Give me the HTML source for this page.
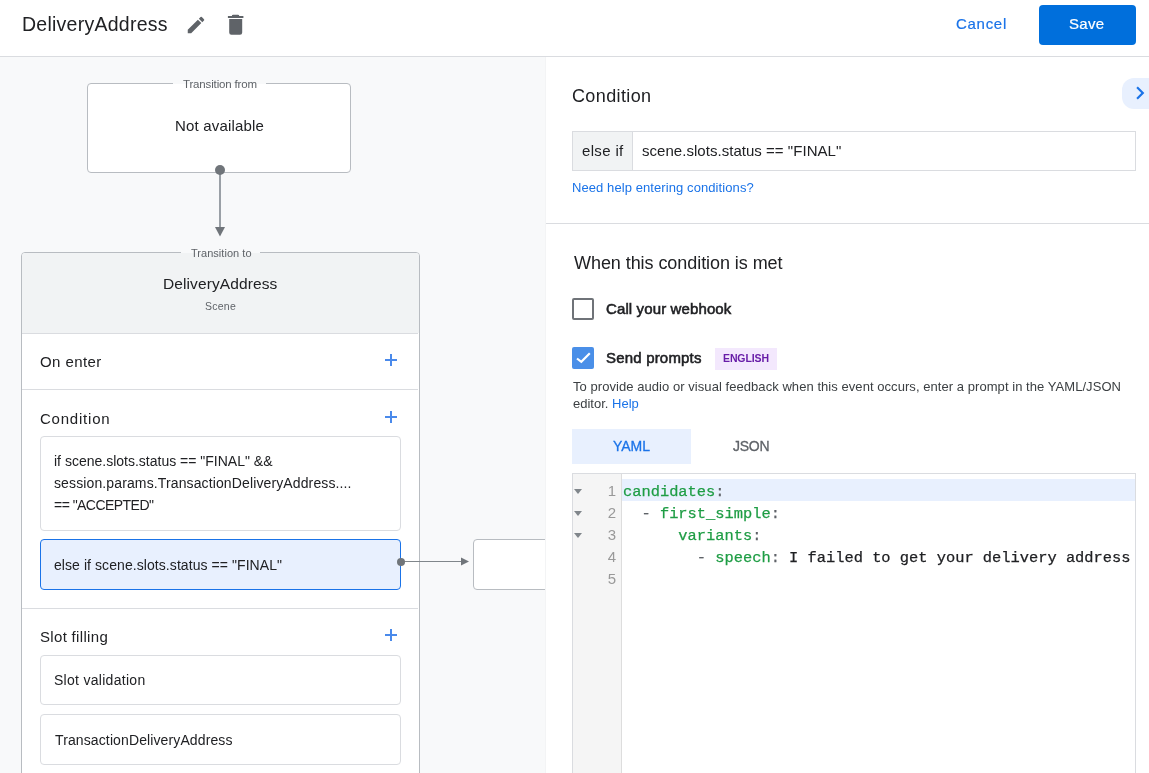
<!DOCTYPE html>
<html><head><meta charset="utf-8"><style>
*{box-sizing:border-box;margin:0;padding:0}
html,body{width:1149px;height:773px;overflow:hidden;background:#fff;font-family:"Liberation Sans",sans-serif;color:#202124}
.a{position:absolute}
.t{position:absolute;white-space:nowrap;line-height:1;font-family:"Liberation Sans",sans-serif;z-index:5;will-change:transform}
.plus{position:absolute;width:12px;height:12px}
.plus:before,.plus:after{content:"";position:absolute;background:#4285f4}
.plus:before{left:5px;top:0;width:2px;height:12px}
.plus:after{left:0;top:5px;width:12px;height:2px}
.code{position:absolute;font-family:"Liberation Mono",monospace;font-size:15.38px;white-space:pre;line-height:22px;color:#202124;z-index:5;will-change:transform;-webkit-text-stroke:0.25px currentColor}
.g{color:#1f9d45}
.p{color:#5f6368}
.ln{position:absolute;font-family:"Liberation Sans",sans-serif;font-size:15px;color:#999999;line-height:22px;text-align:right;width:30px;z-index:5;will-change:transform}
.fold{position:absolute;width:0;height:0;border-left:4.5px solid transparent;border-right:4.5px solid transparent;border-top:5px solid #80868b}
</style></head><body>
<div class="a" style="left:0;top:56px;width:1149px;height:1px;background:#dadce0"></div>
<svg class="a" style="left:184.7px;top:14px" width="22" height="22" viewBox="0 0 24 24"><path fill="#5f6368" d="M3 17.25V21h3.75L17.81 9.94l-3.75-3.75L3 17.25zM20.71 7.04a.996.996 0 0 0 0-1.41l-2.34-2.34a.996.996 0 0 0-1.41 0l-1.83 1.83 3.75 3.75 1.83-1.83z"/></svg>
<svg class="a" style="left:0;top:0" width="300" height="56"><path fill="#5f6368" d="M231.8 16.2 Q231.8 14.8 233.2 14.8 H237.9 Q239.3 14.8 239.3 16.2 Z M227.9 16.1 H243.4 V17.9 H227.9 Z M229.2 19.1 H242.2 V32.6 Q242.2 34.8 240 34.8 H231.4 Q229.2 34.8 229.2 32.6 Z"/></svg>
<div class="a" style="left:1039px;top:5px;width:97px;height:40px;background:#006fdc;border-radius:4px"></div>
<div class="a" style="left:0;top:57px;width:546px;height:716px;background:#f8f9fa"></div>
<div class="a" style="left:87px;top:83px;width:264px;height:90px;background:#fff;border:1px solid #b8bcc1;border-radius:4px"></div>
<div class="a" style="left:173px;top:78px;width:93px;height:12px;background:linear-gradient(#f8f9fa 50%,#fff 50%)"></div>
<div class="a" style="left:219px;top:172px;width:2px;height:56px;background:#9aa0a6"></div>
<div class="a" style="left:215px;top:164.6px;width:10px;height:10px;border-radius:50%;background:#70757a"></div>
<svg class="a" style="left:214px;top:226px" width="12" height="12"><path d="M1 1H11L6 10.5Z" fill="#70757a"/></svg>
<div class="a" style="left:21px;top:252px;width:399px;height:560px;background:#fff;border:1px solid #b8bcc1;border-radius:4px;overflow:hidden"><div class="a" style="left:0;top:0;width:397px;height:80px;background:#f1f3f4"></div></div>
<div class="a" style="left:181px;top:247px;width:79px;height:12px;background:linear-gradient(#f8f9fa 50%,#f1f3f4 50%)"></div>
<div class="a" style="left:22px;top:333px;width:396px;height:1px;background:#dadce0"></div>
<div class="a" style="left:22px;top:389px;width:396px;height:1px;background:#dadce0"></div>
<div class="a" style="left:22px;top:608px;width:396px;height:1px;background:#dadce0"></div>
<svg class="a" style="left:385px;top:354px" width="12" height="12"><path d="M5 0H7V5H12V7H7V12H5V7H0V5H5Z" fill="#4a8aeb"/></svg>
<svg class="a" style="left:385px;top:411px" width="12" height="12"><path d="M5 0H7V5H12V7H7V12H5V7H0V5H5Z" fill="#4a8aeb"/></svg>
<svg class="a" style="left:385px;top:629px" width="12" height="12"><path d="M5 0H7V5H12V7H7V12H5V7H0V5H5Z" fill="#4a8aeb"/></svg>
<div class="a" style="left:40px;top:436px;width:361px;height:95px;background:#fff;border:1px solid #dadce0;border-radius:4px"></div>
<div class="a" style="left:40px;top:539px;width:361px;height:51px;background:#e8f0fe;border:1px solid #1a73e8;border-radius:4px"></div>
<div class="a" style="left:40px;top:655px;width:361px;height:50px;background:#fff;border:1px solid #dadce0;border-radius:4px"></div>
<div class="a" style="left:40px;top:714px;width:361px;height:51px;background:#fff;border:1px solid #dadce0;border-radius:4px"></div>
<div class="a" style="left:403px;top:561px;width:59px;height:1px;background:#80868b"></div>
<div class="a" style="left:397px;top:557.5px;width:8px;height:8px;border-radius:50%;background:#70757a"></div>
<svg class="a" style="left:459px;top:555px" width="12" height="12"><path d="M2 2.5V10.5L10 6.5Z" fill="#70757a"/></svg>
<div class="a" style="left:473px;top:539px;width:120px;height:51px;background:#fff;border:1px solid #b8bcc1;border-radius:4px"></div>
<div class="a" style="left:545px;top:57px;width:1px;height:716px;background:#f3f4f5"></div>
<div class="a" style="left:546px;top:57px;width:603px;height:716px;background:#fff"></div>
<div class="a" style="left:1122px;top:78px;width:40px;height:31px;background:#e8f0fe;border-radius:12px 0 0 12px"></div>
<svg class="a" style="left:1126.9px;top:79.8px" width="26" height="26" viewBox="0 0 24 24"><path fill="#1a73e8" d="M10 6L8.59 7.41 13.17 12l-4.58 4.59L10 18l6-6z"/></svg>
<div class="a" style="left:572px;top:131px;width:564px;height:40px;border:1px solid #dadce0;background:#fff"></div>
<div class="a" style="left:572px;top:131px;width:61px;height:40px;border:1px solid #dadce0;background:#f1f3f4"></div>
<div class="a" style="left:546px;top:223px;width:603px;height:1px;background:#dadce0"></div>
<div class="a" style="left:572px;top:298px;width:22px;height:22px;border:2px solid #6f7378;border-radius:2px"></div>
<div class="a" style="left:572px;top:347px;width:22px;height:22px;background:#4a8fe8;border-radius:2px"></div>
<svg class="a" style="left:572px;top:347px" width="22" height="22"><path d="M5 11.5L9.3 14.8L17.8 6.3" stroke="#fff" stroke-width="2.2" fill="none"/></svg>
<div class="a" style="left:715px;top:348px;width:62px;height:22px;background:#f3e8fd"></div>
<div class="a" style="left:572px;top:429px;width:119px;height:35px;background:#e8f0fe"></div>
<div class="a" style="left:572px;top:473px;width:564px;height:320px;border:1px solid #dadce0;background:#fff"></div>
<div class="a" style="left:573px;top:474px;width:49px;height:300px;background:#f5f5f5;border-right:1px solid #dddddd"></div>
<div class="a" style="left:622px;top:479px;width:513px;height:22px;background:#e8f0fe"></div>
<div class="fold" style="left:574.2px;top:489px"></div>
<div class="fold" style="left:574.2px;top:511px"></div>
<div class="fold" style="left:574.2px;top:533px"></div>
<div class="ln" style="left:586px;top:480px">1<br>2<br>3<br>4<br>5</div>
<div class="code" style="left:623px;top:481px"><span class="g">candidates</span><span class="p">:</span>
  <span class="p">-</span> <span class="g">first_simple</span><span class="p">:</span>
      <span class="g">variants</span><span class="p">:</span>
        <span class="p">-</span> <span class="g">speech</span><span class="p">:</span> I failed to get your delivery address
</div>
<div class="t" id="h_title" style="left:21.86px;top:15px;font-size:19.5px;font-weight:normal;color:#202124;letter-spacing:0.253px">DeliveryAddress</div>
<div class="t" id="h_cancel" style="left:956.36px;top:16px;font-size:15px;font-weight:normal;-webkit-text-stroke:0.2px currentColor;color:#1a73e8;letter-spacing:0.708px">Cancel</div>
<div class="t" id="h_save" style="left:1069.00px;top:16px;font-size:15px;font-weight:normal;-webkit-text-stroke:0.2px currentColor;color:#ffffff;letter-spacing:0.307px">Save</div>
<div class="t" id="tf_lbl" style="left:182.50px;top:79px;font-size:11.5px;font-weight:normal;color:#5f6368;letter-spacing:-0.154px">Transition from</div>
<div class="t" id="na" style="left:174.86px;top:118px;font-size:15px;font-weight:normal;color:#202124;letter-spacing:0.180px">Not available</div>
<div class="t" id="tt_lbl" style="left:190.64px;top:248px;font-size:11px;font-weight:normal;color:#5f6368;letter-spacing:0.032px">Transition to</div>
<div class="t" id="sc_title" style="left:163.32px;top:276px;font-size:15.5px;font-weight:normal;color:#202124;letter-spacing:0.104px">DeliveryAddress</div>
<div class="t" id="sc_sub" style="left:204.64px;top:301px;font-size:10.5px;font-weight:normal;color:#5f6368;letter-spacing:0.250px">Scene</div>
<div class="t" id="on_enter" style="left:39.86px;top:354px;font-size:15px;font-weight:normal;color:#202124;letter-spacing:0.406px">On enter</div>
<div class="t" id="cond" style="left:39.86px;top:411px;font-size:15px;font-weight:normal;color:#202124;letter-spacing:0.780px">Condition</div>
<div class="t" id="c1l1" style="left:53.50px;top:454px;font-size:14px;font-weight:normal;color:#202124;letter-spacing:0.000px">if scene.slots.status == "FINAL" &amp;&amp;</div>
<div class="t" id="c1l2" style="left:53.50px;top:476px;font-size:14px;font-weight:normal;color:#202124;letter-spacing:0.124px">session.params.TransactionDeliveryAddress....</div>
<div class="t" id="c1l3" style="left:53.50px;top:498px;font-size:14px;font-weight:normal;color:#202124;letter-spacing:-0.538px">== "ACCEPTED"</div>
<div class="t" id="c2" style="left:53.86px;top:558px;font-size:14px;font-weight:normal;color:#202124;letter-spacing:0.071px">else if scene.slots.status == "FINAL"</div>
<div class="t" id="slotf" style="left:39.68px;top:629px;font-size:15px;font-weight:normal;color:#202124;letter-spacing:0.322px">Slot filling</div>
<div class="t" id="sv" style="left:53.50px;top:673px;font-size:14px;font-weight:normal;color:#202124;letter-spacing:0.286px">Slot validation</div>
<div class="t" id="tda" style="left:54.50px;top:733px;font-size:14px;font-weight:normal;color:#202124;letter-spacing:0.117px">TransactionDeliveryAddress</div>
<div class="t" id="r_cond" style="left:572.00px;top:87px;font-size:18px;font-weight:normal;color:#202124;letter-spacing:0.375px">Condition</div>
<div class="t" id="elseif" style="left:581.68px;top:143px;font-size:15px;font-weight:normal;color:#202124;letter-spacing:0.347px">else if</div>
<div class="t" id="inp" style="left:641.50px;top:143px;font-size:15px;font-weight:normal;color:#202124;letter-spacing:0.036px">scene.slots.status == "FINAL"</div>
<div class="t" id="help" style="left:572.00px;top:181px;font-size:13px;font-weight:normal;color:#1a73e8;letter-spacing:0.085px">Need help entering conditions?</div>
<div class="t" id="when" style="left:573.68px;top:254px;font-size:18px;font-weight:normal;color:#202124;letter-spacing:-0.062px">When this condition is met</div>
<div class="t" id="webhook" style="left:606.00px;top:301px;font-size:15px;font-weight:normal;-webkit-text-stroke:0.55px currentColor;color:#202124;letter-spacing:0.120px">Call your webhook</div>
<div class="t" id="sendp" style="left:606.36px;top:350px;font-size:15px;font-weight:normal;-webkit-text-stroke:0.55px currentColor;color:#202124;letter-spacing:0.189px">Send prompts</div>
<div class="t" id="eng" style="left:722.50px;top:353px;font-size:10.5px;font-weight:bold;color:#681da8;letter-spacing:-0.117px">ENGLISH</div>
<div class="t" id="para1" style="left:573.00px;top:380px;font-size:13px;font-weight:normal;color:#3c4043;letter-spacing:0.056px">To provide audio or visual feedback when this event occurs, enter a prompt in the YAML/JSON</div>
<div class="t" id="para2" style="left:573.00px;top:397px;font-size:13px;font-weight:normal;color:#3c4043;letter-spacing:0.007px">editor. <span style="color:#1a73e8">Help</span></div>
<div class="t" id="yaml" style="left:613.36px;top:439px;font-size:14px;font-weight:normal;-webkit-text-stroke:0.3px currentColor;color:#1a73e8;letter-spacing:-0.027px">YAML</div>
<div class="t" id="json" style="left:732.50px;top:439px;font-size:14px;font-weight:normal;-webkit-text-stroke:0.3px currentColor;color:#5f6368;letter-spacing:-0.280px">JSON</div>
</body></html>
